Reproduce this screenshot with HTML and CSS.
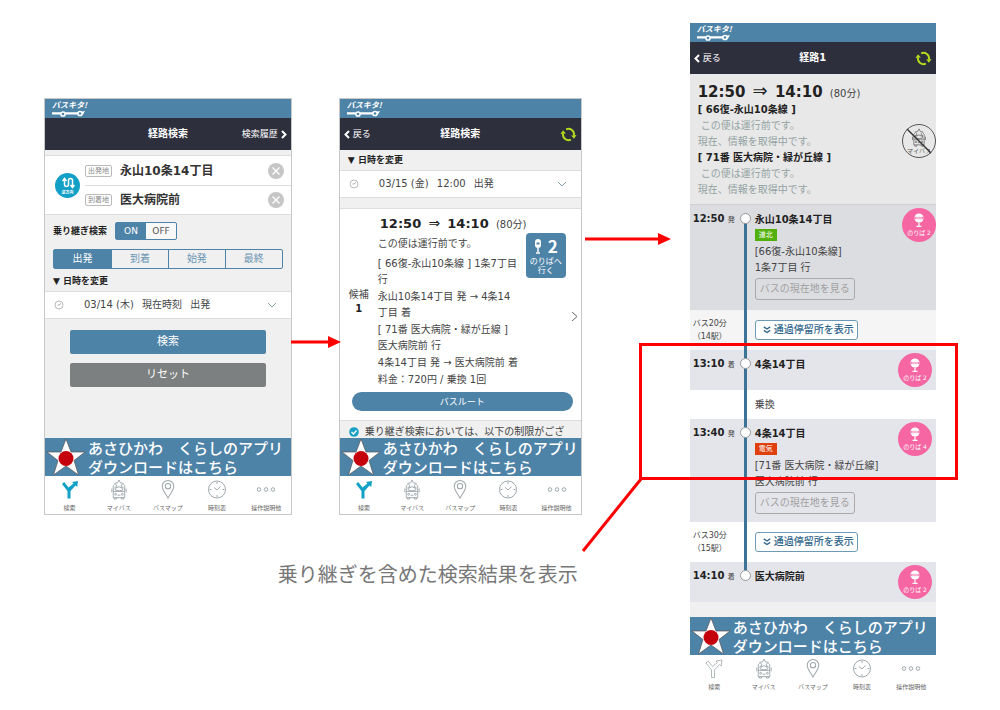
FILE: index.html
```html
<!DOCTYPE html>
<html lang="ja">
<head>
  <meta charset="utf-8">
  <title>バスキタ! 乗り継ぎ検索</title>
  <link rel="stylesheet" href="styles.css">
</head>
<body>
  <!-- shared icons -->
  <svg class="defs" width="0" height="0">
    <symbol id="bus-line" viewBox="0 0 36 7">
      <path d="M0 2.200h27l6-1.200-2 3.500H0z" fill="#fff"/>
      <circle cx="11" cy="4" r="2.100" fill="#4e83a8" stroke="#fff" stroke-width="1.500"/>
      <circle cx="28" cy="3.500" r="2.100" fill="#4e83a8" stroke="#fff" stroke-width="1.500"/>
    </symbol>
    <symbol id="reload" viewBox="-1 -1 18 18">
      <path d="M2.200 7A6 6 0 0 0 10.500 13.500M13.800 9A6 6 0 0 0 5.500 2.500" fill="none" stroke="#b4dc1e" stroke-width="2"/>
      <path d="M-.500 7.500L2.200 3.500 5.200 7zM10.800 9l5.700-.500L13.800 12.500z" fill="#b4dc1e"/>
    </symbol>
    <symbol id="clock" viewBox="0 0 10 10">
      <circle cx="5" cy="5" r="4" fill="none" stroke="#aaa" stroke-width=".8"/>
      <path d="M3.500 5H5L7 3.500" fill="none" stroke="#999" stroke-width=".8"/>
    </symbol>
    <symbol id="down" viewBox="0 0 10 6">
      <path d="M1 1l4 4 4-4" fill="none" stroke="#8aa0a8"/>
    </symbol>
    <symbol id="clear" viewBox="0 0 16 16">
      <circle cx="8" cy="8" r="8" fill="#c6c6c6"/>
      <path d="M4.500 4.500l7 7M11.500 4.500l-7 7" stroke="#fff" stroke-width="1.300"/>
    </symbol>
    <symbol id="star" viewBox="0 0 40 38">
      <path d="M20 1l5 13h14L28 22.500 32.500 37 20 28 7.500 37 12 22.500 1 14h14z" fill="#fff" stroke="#555" stroke-width=".7"/>
      <circle cx="20" cy="20.500" r="7.500" fill="#c4000c"/>
    </symbol>
    <symbol id="tab-route" viewBox="0 0 20 20">
      <path d="M2 4.500L4.200 2.500l4.300 5.500 5-4L12 2.500l6-1-.800 6-1.700-1.500-5 5.500V19H7.500v-7.500z" fill="#fff" stroke="#a0a8ac" stroke-width=".8"/>
    </symbol>
    <symbol id="tab-route-on" viewBox="0 0 20 20">
      <path d="M2 4.500L4.200 2.500l4.300 5.500 5-4L12 2.500l6-1-.800 6-1.700-1.500-5 5.500V19H7.500v-7.500z" fill="#12a0c6"/>
    </symbol>
    <symbol id="tab-bus" viewBox="0 0 20 22">
      <g fill="none" stroke="currentColor">
        <path d="M10 1l1.500 3 3 .500-2 2 .500 3-3-1.500L7 9.500l.500-3-2-2 3-.500z"/>
        <path d="M5.500 5.500L4 7v12.500h12V7l-1.500-1.500M4 13h12M6 8v3.500q4 2 8 0V8M5 19.500v1.500h2.500v-1.500M12.500 19.500v1.500H15v-1.500M8.500 17h3M2.500 10v4M17.500 10v4"/>
        <circle cx="6.500" cy="16" r="1"/><circle cx="13.500" cy="16" r="1"/>
      </g>
    </symbol>
    <symbol id="tab-pin" viewBox="0 0 20 22">
      <g fill="none" stroke="#a0a8ac" stroke-width="1.100">
        <path d="M10 20C7.500 15 4 12 4 7.500a6 6 0 0 1 12 0C16 12 12.500 15 10 20z"/>
        <circle cx="10" cy="7.500" r="2.800"/>
      </g>
    </symbol>
    <symbol id="tab-time" viewBox="0 0 20 20">
      <circle cx="10" cy="10" r="8.500" fill="none" stroke="#a0a8ac"/>
      <path d="M7 8l3 2.500L13.500 7M10 2.500v2M10 15.500v2M2.500 10h2M15.500 10h2" fill="none" stroke="#a0a8ac"/>
    </symbol>
    <symbol id="tab-more" viewBox="0 0 20 20">
      <g fill="none" stroke="#a0a8ac"><circle cx="3" cy="10" r="1.800"/><circle cx="10" cy="10" r="1.800"/><circle cx="17" cy="10" r="1.800"/></g>
    </symbol>
    <symbol id="pole" viewBox="0 0 12 14">
      <circle cx="6" cy="5" r="4.600" fill="#fff"/>
      <path d="M1.500 5h9" stroke="#f566a3" stroke-width="2.200"/>
      <path d="M2.500 5h7M6 9.500V13M3.500 13.300h5" stroke="#fff" stroke-width="1.200"/>
    </symbol>
    <symbol id="more-stops" viewBox="0 0 8 8">
      <path d="M.800.800l3.200 2.200L7.200.800M.800 4.300L4 6.500l3.200-2.200" fill="none" stroke="#33678c" stroke-width="1.400"/>
    </symbol>
  </svg>

  <div class="page">
    <div class="search-flow">
      <div class="pair">

        <section class="phone">
          <header class="brand"><span class="brand-name">バスキタ!</span><svg><use href="#bus-line"/></svg></header>
          <nav class="title-bar">
            <span></span>
            <h2>経路検索</h2>
            <a href="#history">検索履歴 <svg class="angle" viewBox="0 0 6 9"><path d="M1 1l3.500 3.500L1 8" /></svg></a>
          </nav>
          <main class="form-body">
            <div class="places">
              <button class="swap" aria-label="逆方向">
                <svg viewBox="0 0 14 12"><path d="M3.500 2v5.500a2 2 0 0 0 4 0v-4a2 2 0 0 1 4 0V9M1.500 4l2-2.500 2 2.500M9.500 8l2 2.500 2-2.500" /></svg>
                <span>逆方向</span>
              </button>
              <div class="fields">
                <div class="field">
                  <label for="from">出発地</label>
                  <input id="from" type="text" value="永山10条14丁目">
                  <button class="plain" aria-label="クリア"><svg class="clear"><use href="#clear"/></svg></button>
                </div>
                <div class="field">
                  <label for="to">到着地</label>
                  <input id="to" type="text" value="医大病院前">
                  <button class="plain" aria-label="クリア"><svg class="clear"><use href="#clear"/></svg></button>
                </div>
              </div>
            </div>
            <div class="toggle-row">
              <span>乗り継ぎ検索</span>
              <div class="toggle"><button class="on">ON</button><button>OFF</button></div>
            </div>
            <div class="segments">
              <button class="on">出発</button><button>到着</button><button>始発</button><button>最終</button>
            </div>
            <h3 class="change">▼ 日時を変更</h3>
            <button class="date-row">
              <svg class="clock"><use href="#clock"/></svg>
              <span>03/14 (木)&ensp; 現在時刻&ensp; 出発</span>
              <svg class="down"><use href="#down"/></svg>
            </button>
            <div class="actions">
              <button class="submit">検索</button>
              <button class="reset">リセット</button>
            </div>
          </main>
          <a class="banner" href="#app"><svg><use href="#star"/></svg><span>あさひかわ　くらしのアプリ<br>ダウンロードはこちら</span></a>
          <nav class="tabs">
            <a href="#search"><svg><use href="#tab-route-on"/></svg>検索</a>
            <a href="#mybus"><svg><use href="#tab-bus"/></svg>マイバス</a>
            <a href="#map"><svg><use href="#tab-pin"/></svg>バスマップ</a>
            <a href="#timetable"><svg><use href="#tab-time"/></svg>時刻表</a>
            <a href="#help"><svg><use href="#tab-more"/></svg>操作説明他</a>
          </nav>
        </section>

        <section class="phone">
          <header class="brand"><span class="brand-name">バスキタ!</span><svg><use href="#bus-line"/></svg></header>
          <nav class="title-bar">
            <a href="#back"><svg class="angle" viewBox="0 0 6 9"><path d="M5 1L1.500 4.500 5 8" /></svg> 戻る</a>
            <h2>経路検索</h2>
            <button class="plain" aria-label="更新"><svg class="reload"><use href="#reload"/></svg></button>
          </nav>
          <h3 class="change">▼ 日時を変更</h3>
          <button class="date-row">
            <svg class="clock"><use href="#clock"/></svg>
            <span>03/15 (金)&ensp; 12:00&ensp; 出発</span>
            <svg class="down"><use href="#down"/></svg>
          </button>
          <main class="candidate">
            <div class="candidate-main">
              <div class="rank">候補<b>1</b></div>
              <div class="summary">
                <p class="times"><b>12:50</b> <i>⇒</i> <b>14:10</b> <small>(80分)</small></p>
                <p class="status">この便は運行前です。</p>
                <p>[ 66復-永山10条線 ] 1条7丁目<br>行</p>
                <p>永山10条14丁目 発 → 4条14<br>丁目 着</p>
                <p>[ 71番 医大病院・緑が丘線 ]<br>医大病院前 行</p>
                <p>4条14丁目 発 → 医大病院前 着</p>
                <p>料金：720円 / 乗換 1回</p>
              </div>
              <button class="stand">
                <span class="stand-no"><svg viewBox="0 0 8 16"><rect x="1" y="1" width="6" height="9" rx="3" fill="#fff"/><path d="M2.500 4.500h3v2h-3z" fill="#4e83a8"/><path d="M4 10v4M2 15h4" stroke="#fff" stroke-width="1.500"/></svg>2</span>
                のりばへ<br>行く
              </button>
              <svg class="next" viewBox="0 0 7 11"><path d="M1 1l5 4.500L1 10" /></svg>
            </div>
            <button class="route">バスルート</button>
          </main>
          <p class="notice"><svg viewBox="0 0 10 10"><circle cx="5" cy="5" r="4.800" fill="#1aa0c4"/><path d="M2.500 5l2 2 3-3.500" fill="none" stroke="#fff" stroke-width="1.300"/></svg>乗り継ぎ検索においては、以下の制限がござ</p>
          <a class="banner" href="#app"><svg><use href="#star"/></svg><span>あさひかわ　くらしのアプリ<br>ダウンロードはこちら</span></a>
          <nav class="tabs">
            <a href="#search"><svg><use href="#tab-route-on"/></svg>検索</a>
            <a href="#mybus"><svg><use href="#tab-bus"/></svg>マイバス</a>
            <a href="#map"><svg><use href="#tab-pin"/></svg>バスマップ</a>
            <a href="#timetable"><svg><use href="#tab-time"/></svg>時刻表</a>
            <a href="#help"><svg><use href="#tab-more"/></svg>操作説明他</a>
          </nav>
        </section>
      </div>
      <p class="caption">乗り継ぎを含めた検索結果を表示</p>
    </div>

    <section class="phone detail">
      <header class="brand"><span class="brand-name">バスキタ!</span><svg><use href="#bus-line"/></svg></header>
      <nav class="title-bar">
        <a href="#back"><svg class="angle" viewBox="0 0 6 9"><path d="M5 1L1.500 4.500 5 8" /></svg> 戻る</a>
        <h2>経路1</h2>
        <button class="plain" aria-label="更新"><svg class="reload"><use href="#reload"/></svg></button>
      </nav>
      <div class="overview">
        <div>
          <p class="times"><b>12:50</b> <i>⇒</i> <b>14:10</b> <small>(80分)</small></p>
          <p><b>[ 66復-永山10条線 ]</b></p>
          <p class="muted">&nbsp;この便は運行前です。</p>
          <p class="muted">現在、情報を取得中です。</p>
          <p><b>[ 71番 医大病院・緑が丘線 ]</b></p>
          <p class="muted">&nbsp;この便は運行前です。</p>
          <p class="muted">現在、情報を取得中です。</p>
        </div>
        <button class="mybus">
          <svg class="mybus-icon"><use href="#tab-bus"/></svg>
          <span>マイバス</span>
          <svg class="strike" viewBox="0 0 34 34"><path d="M5 5l24 24" stroke="#333" stroke-width="1.500"/></svg>
        </button>
      </div>
      <ol class="steps">
        <li class="stop first">
          <div class="time"><b>12:50</b> 発</div>
          <div class="rail"><span class="dot"></span></div>
          <div class="info">
            <b>永山10条14丁目</b>
            <span class="tag">道北</span>
            <p>[66復-永山10条線]<br>1条7丁目 行</p>
            <button class="locate">バスの現在地を見る</button>
          </div>
          <button class="platform"><svg><use href="#pole"/></svg>のりば 2</button>
        </li>
        <li class="ride first-ride">
          <div class="time">バス20分<br>（14駅）</div>
          <div class="rail"></div>
          <div class="info"><button class="stops"><svg><use href="#more-stops"/></svg>通過停留所を表示</button></div>
        </li>
        <li class="stop">
          <div class="time"><b>13:10</b> 着</div>
          <div class="rail"><span class="dot"></span></div>
          <div class="info"><b>4条14丁目</b></div>
          <button class="platform"><svg><use href="#pole"/></svg>のりば 2</button>
        </li>
        <li class="transfer">
          <div class="time"></div>
          <div class="rail"></div>
          <div class="info">乗換</div>
        </li>
        <li class="stop">
          <div class="time"><b>13:40</b> 発</div>
          <div class="rail"><span class="dot"></span></div>
          <div class="info">
            <b>4条14丁目</b>
            <span class="tag red">電気</span>
            <p>[71番 医大病院・緑が丘線]<br>医大病院前 行</p>
            <button class="locate">バスの現在地を見る</button>
          </div>
          <button class="platform"><svg><use href="#pole"/></svg>のりば 4</button>
        </li>
        <li class="ride">
          <div class="time">バス30分<br>（15駅）</div>
          <div class="rail"></div>
          <div class="info"><button class="stops"><svg><use href="#more-stops"/></svg>通過停留所を表示</button></div>
        </li>
        <li class="stop last">
          <div class="time"><b>14:10</b> 着</div>
          <div class="rail"><span class="dot"></span></div>
          <div class="info"><b>医大病院前</b></div>
          <button class="platform"><svg><use href="#pole"/></svg>のりば 2</button>
        </li>
      </ol>
      <a class="banner" href="#app"><svg><use href="#star"/></svg><span>あさひかわ　くらしのアプリ<br>ダウンロードはこちら</span></a>
      <nav class="tabs">
        <a href="#search"><svg><use href="#tab-route"/></svg>検索</a>
        <a href="#mybus"><svg><use href="#tab-bus"/></svg>マイバス</a>
        <a href="#map"><svg><use href="#tab-pin"/></svg>バスマップ</a>
        <a href="#timetable"><svg><use href="#tab-time"/></svg>時刻表</a>
        <a href="#help"><svg><use href="#tab-more"/></svg>操作説明他</a>
      </nav>
    </section>

    <!-- arrows and the frame round the transfer -->
    <svg class="marks" viewBox="0 0 1000 710" preserveAspectRatio="none">
      <g fill="none" stroke="#f00" stroke-width="3">
        <path d="M291 342h40M585 239h76M641 479l-58 72"/>
        <rect x="640.500" y="344.500" width="316" height="134"/>
      </g>
      <path d="M328 336l13 6-13 6zM658 233l13 6-13 6z" fill="#f00"/>
    </svg>
  </div>
</body>
</html>
```

FILE: styles.css
```css
* {
  box-sizing: border-box;
}

body {
  margin: 0;
  background: #fff;
  color: #444;
  font: 10px/16px "DejaVu Sans", "Noto Sans CJK JP", sans-serif;
}

h2, h3, p, ol {
  margin: 0;
  padding: 0;
}

a {
  color: inherit;
  text-decoration: none;
}

button, input {
  font: inherit;
  color: inherit;
  margin: 0;
  padding: 0;
  border: 0;
  background: none;
}

svg {
  display: block;
  flex: none;
}

.defs {
  position: absolute;
}

.page {
  position: relative;
  display: grid;
  grid-template-columns: 537fr 248fr;
  gap: 107px;
  align-items: start;
  padding: 22px 63px 12px 44px;
}

.search-flow {
  padding-top: 76px;
}

.pair {
  display: grid;
  grid-template-columns: 248fr 243fr;
  gap: 47px;
}

.caption {
  margin-top: 44px;
  padding-right: 4px;
  text-align: right;
  color: #777;
  font: 20px/30px "Noto Sans CJK JP", sans-serif;
  white-space: nowrap;
}

.marks {
  position: absolute;
  top: 0;
  left: 0;
  width: 100%;
  height: 710px;
  pointer-events: none;
}

/* phone frame */
.phone {
  display: flex;
  flex-direction: column;
  min-width: 0;
  border: 1px solid #c8c8c8;
  background: #f0f0f0;
  overflow: hidden;
}

.detail {
  border-color: transparent;
  background: #fff;
}

.brand {
  height: 19px;
  padding: 1px 7px;
  background: #4e83a8;
  color: #fff;
}

.brand-name {
  display: block;
  font: italic bold 8px/10px "Noto Sans CJK JP", sans-serif;
}

.brand svg {
  width: 36px;
  height: 7px;
}

.title-bar {
  display: grid;
  grid-template-columns: 1fr auto 1fr;
  align-items: center;
  height: 32px;
  padding: 0 4px;
  background: #2e2f3d;
  color: #fff;
}

.title-bar h2 {
  font-size: 10px;
}

.title-bar a {
  display: flex;
  align-items: center;
  gap: 3px;
  font-size: 9px;
}

.title-bar > :last-child {
  justify-self: end;
}

.angle {
  width: 6px;
  height: 9px;
  fill: none;
  stroke: #fff;
  stroke-width: 2;
}

.reload {
  width: 17px;
  height: 17px;
}

.change {
  padding: 2px 8px;
  color: #222;
  font: bold 9px/16px "DejaVu Sans", "Noto Sans CJK JP", sans-serif;
}

.date-row {
  display: flex;
  align-items: center;
  width: 100%;
  height: 28px;
  padding: 0 14px 0 9px;
  border-top: 1px solid #ddd;
  border-bottom: 1px solid #ddd;
  background: #fff;
  text-align: left;
}

.date-row span {
  flex: 1;
  padding-left: 20px;
  white-space: nowrap;
}

.clock {
  width: 10px;
  height: 10px;
}

.down {
  width: 10px;
  height: 6px;
}

/* search form */
.form-body {
  flex: 1;
}

.places {
  display: flex;
  align-items: center;
  margin-top: 5px;
  border-top: 1px solid #ddd;
  border-bottom: 1px solid #ddd;
  background: #fff;
}

.swap {
  display: flex;
  flex-direction: column;
  align-items: center;
  width: 25px;
  height: 25px;
  margin: 0 5px 0 10px;
  padding-top: 4px;
  border-radius: 50%;
  background: #12a0c6;
  color: #fff;
  font: bold 4px/6px "Noto Sans CJK JP", sans-serif;
}

.swap svg {
  width: 14px;
  height: 12px;
  fill: none;
  stroke: #fff;
  stroke-width: 1.5;
}

.fields {
  flex: 1;
  min-width: 0;
}

.field {
  display: flex;
  align-items: center;
  height: 29px;
  padding-right: 7px;
}

.field + .field {
  border-top: 1px solid #ddd;
}

.field label {
  flex: none;
  padding: 0 2px;
  border: 1px solid #bbb;
  border-radius: 2px;
  color: #888;
  font-size: 7px;
  line-height: 10px;
}

.field input {
  flex: 1;
  min-width: 0;
  padding-left: 8px;
  color: #333;
  font-size: 12px;
  font-weight: bold;
}

.clear {
  width: 16px;
  height: 16px;
}

.toggle-row {
  display: flex;
  align-items: center;
  gap: 8px;
  padding: 7px 8px 0;
  color: #222;
  font-size: 9px;
  font-weight: bold;
}

.toggle {
  display: flex;
  border: 1px solid #4e83a8;
  border-radius: 2px;
  background: #f8f8f8;
  color: #555;
  font-weight: normal;
}

.toggle button {
  width: 30px;
}

.toggle .on, .segments .on {
  background: #4e83a8;
  color: #fff;
}

.segments {
  display: grid;
  grid-template-columns: repeat(4, 1fr);
  margin: 9px 8px 2px;
  border: 1px solid #4e83a8;
  border-radius: 2px;
  color: #6b96b3;
}

.segments button {
  height: 18px;
}

.segments button + button {
  border-left: 1px solid #4e83a8;
}

.actions {
  display: grid;
  gap: 9px;
  padding: 11px 25px;
}

.actions button {
  height: 24px;
  border-radius: 2px;
  color: #fff;
  font-size: 11px;
}

.submit {
  background: #4e83a8;
}

.reset {
  background: #7c8080;
}

/* candidate */
.candidate {
  margin-top: 10px;
  padding-bottom: 9px;
  border-top: 1px solid #ddd;
  border-bottom: 1px solid #ddd;
  background: #fff;
}

.candidate-main {
  display: flex;
  align-items: center;
  padding: 6px 3px 4px 0;
}

.rank {
  flex: none;
  width: 38px;
  text-align: center;
  line-height: 14px;
}

.rank b {
  display: block;
  color: #222;
}

.summary {
  flex: 1;
  min-width: 0;
  white-space: nowrap;
}

.summary p + p {
  margin-top: 1px;
}

.summary .times {
  padding-left: 2px;
}

.summary .status {
  margin: 3px 0 4px;
}

.times {
  white-space: nowrap;
  color: #222;
}

.times b {
  font-size: 13px;
}

.times i {
  padding: 0 4px;
  font-size: 14px;
  font-style: normal;
}

.times small {
  padding-left: 4px;
  color: #444;
  font-size: 10px;
}

.stand {
  align-self: flex-start;
  width: 40px;
  margin: 18px 5px 0 0;
  padding: 4px 0 3px;
  border-radius: 4px;
  background: #4e83a8;
  color: #fff;
  font-size: 8px;
  line-height: 9px;
}

.stand-no {
  display: flex;
  align-items: center;
  justify-content: center;
  gap: 6px;
  padding-bottom: 2px;
  font: bold 17px/18px "Noto Sans CJK JP", sans-serif;
}

.stand-no svg {
  width: 8px;
  height: 16px;
}

.next {
  width: 7px;
  height: 11px;
  margin-top: 30px;
  fill: none;
  stroke: #666;
}

.route {
  display: block;
  width: calc(100% - 20px);
  height: 19px;
  margin: 0 8px 0 12px;
  border-radius: 10px;
  background: #4e83a8;
  color: #fff;
  font-size: 9px;
}

.notice {
  display: flex;
  align-items: center;
  gap: 6px;
  height: 17px;
  padding: 5px 9px 0;
  overflow: hidden;
  white-space: nowrap;
}

.notice svg {
  width: 10px;
  height: 10px;
}

/* banner and tabs */
.banner {
  display: flex;
  align-items: center;
  gap: 2px;
  height: 38px;
  padding-left: 1px;
  overflow: hidden;
  background: #4e83a8;
  color: #fff;
  font: 500 15px/19px "Noto Sans CJK JP", sans-serif;
  white-space: nowrap;
}

.banner svg {
  width: 40px;
  height: 38px;
}

.tabs {
  display: grid;
  grid-template-columns: repeat(5, 1fr);
  padding-top: 3px;
  background: #fff;
  color: #666;
  font-size: 6px;
  line-height: 12px;
}

.tabs a {
  display: flex;
  flex-direction: column;
  align-items: center;
  gap: 2px;
  white-space: nowrap;
}

.tabs svg {
  width: 20px;
  height: 21px;
  color: #a0a8ac;
}

/* route detail */
.overview {
  display: flex;
  align-items: center;
  justify-content: space-between;
  padding: 9px 0 6px 8px;
  background: #e8e8e8;
  color: #222;
}

.overview .times b {
  font-size: 15px;
}

.overview .times i {
  font-size: 18px;
}

.muted {
  color: #93a3a3;
}

.mybus {
  position: relative;
  display: flex;
  flex: none;
  flex-direction: column;
  align-items: center;
  width: 34px;
  height: 34px;
  padding-top: 3px;
  border: 1px solid #555;
  border-radius: 50%;
  color: #555;
  font-size: 6px;
  line-height: 8px;
}

.mybus-icon {
  width: 18px;
  height: 19px;
  color: #777;
}

.strike {
  position: absolute;
  top: -1px;
  left: -1px;
  width: 34px;
  height: 34px;
}

.steps {
  padding-bottom: 15px;
  background: #f0f0f0;
  list-style: none;
}

.steps li {
  display: flex;
  padding-right: 4px;
  background: #fff;
}

.steps .stop {
  background: #e4e5ea;
}

.time {
  flex: none;
  width: 50px;
  padding: 6px 0 0 3px;
  font-size: 7px;
  white-space: nowrap;
}

.time b {
  padding-right: 1px;
  color: #222;
  font-size: 10px;
}

.rail {
  flex: none;
  width: 11px;
  background: linear-gradient(#3d7397, #3d7397) center / 3px 100% no-repeat;
}

.dot {
  display: block;
  width: 11px;
  height: 11px;
  margin-top: 8px;
  border: 1px solid #999;
  border-radius: 50%;
  background: #fff;
}

.info {
  flex: 1;
  min-width: 0;
  padding: 7px 0 0 4px;
  white-space: nowrap;
}

.info b {
  display: block;
  color: #222;
}

.tag {
  display: block;
  width: 22px;
  margin: 1px 0 3px;
  background: #52b00a;
  color: #fff;
  font-size: 7px;
  line-height: 12px;
  text-align: center;
}

.tag.red {
  background: #e0400e;
}

.locate {
  height: 22px;
  margin: 2px 0 8px;
  padding: 0 4px;
  border: 1px solid #aaa;
  border-radius: 3px;
  color: #a0a0a0;
}

.stops {
  display: flex;
  align-items: center;
  gap: 3px;
  height: 20px;
  padding: 0 3px 0 7px;
  border: 1px solid #6c9ab5;
  border-radius: 3px;
  background: #fff;
  color: #33678c;
  font-weight: 500;
}

.stops svg {
  width: 8px;
  height: 8px;
}

.platform {
  display: flex;
  flex: none;
  flex-direction: column;
  align-items: center;
  width: 34px;
  height: 34px;
  margin: 3px 0;
  padding-top: 5px;
  border-radius: 50%;
  background: #f566a3;
  color: #fff;
  font-size: 6px;
  line-height: 12px;
  white-space: nowrap;
}

.platform svg {
  width: 12px;
  height: 14px;
}

.steps .first {
  padding: 0;
  border-top: 1px solid #d0d0d4;
  background: #dcdde1;
}

.steps .first .locate {
  margin-bottom: 10px;
}

.steps .first .rail {
  background-position: center 13px;
}

.steps .last .rail {
  background-size: 3px 13px;
  background-position: center top;
}

.steps .first-ride {
  background: #f5f5f5;
}

.ride .time {
  padding-top: 7px;
  font-size: 8px;
  line-height: 13px;
}

.ride .info {
  padding: 10px 0 10px 4px;
}

.transfer .info {
  padding: 7px 0 6px 4px;
}
```
